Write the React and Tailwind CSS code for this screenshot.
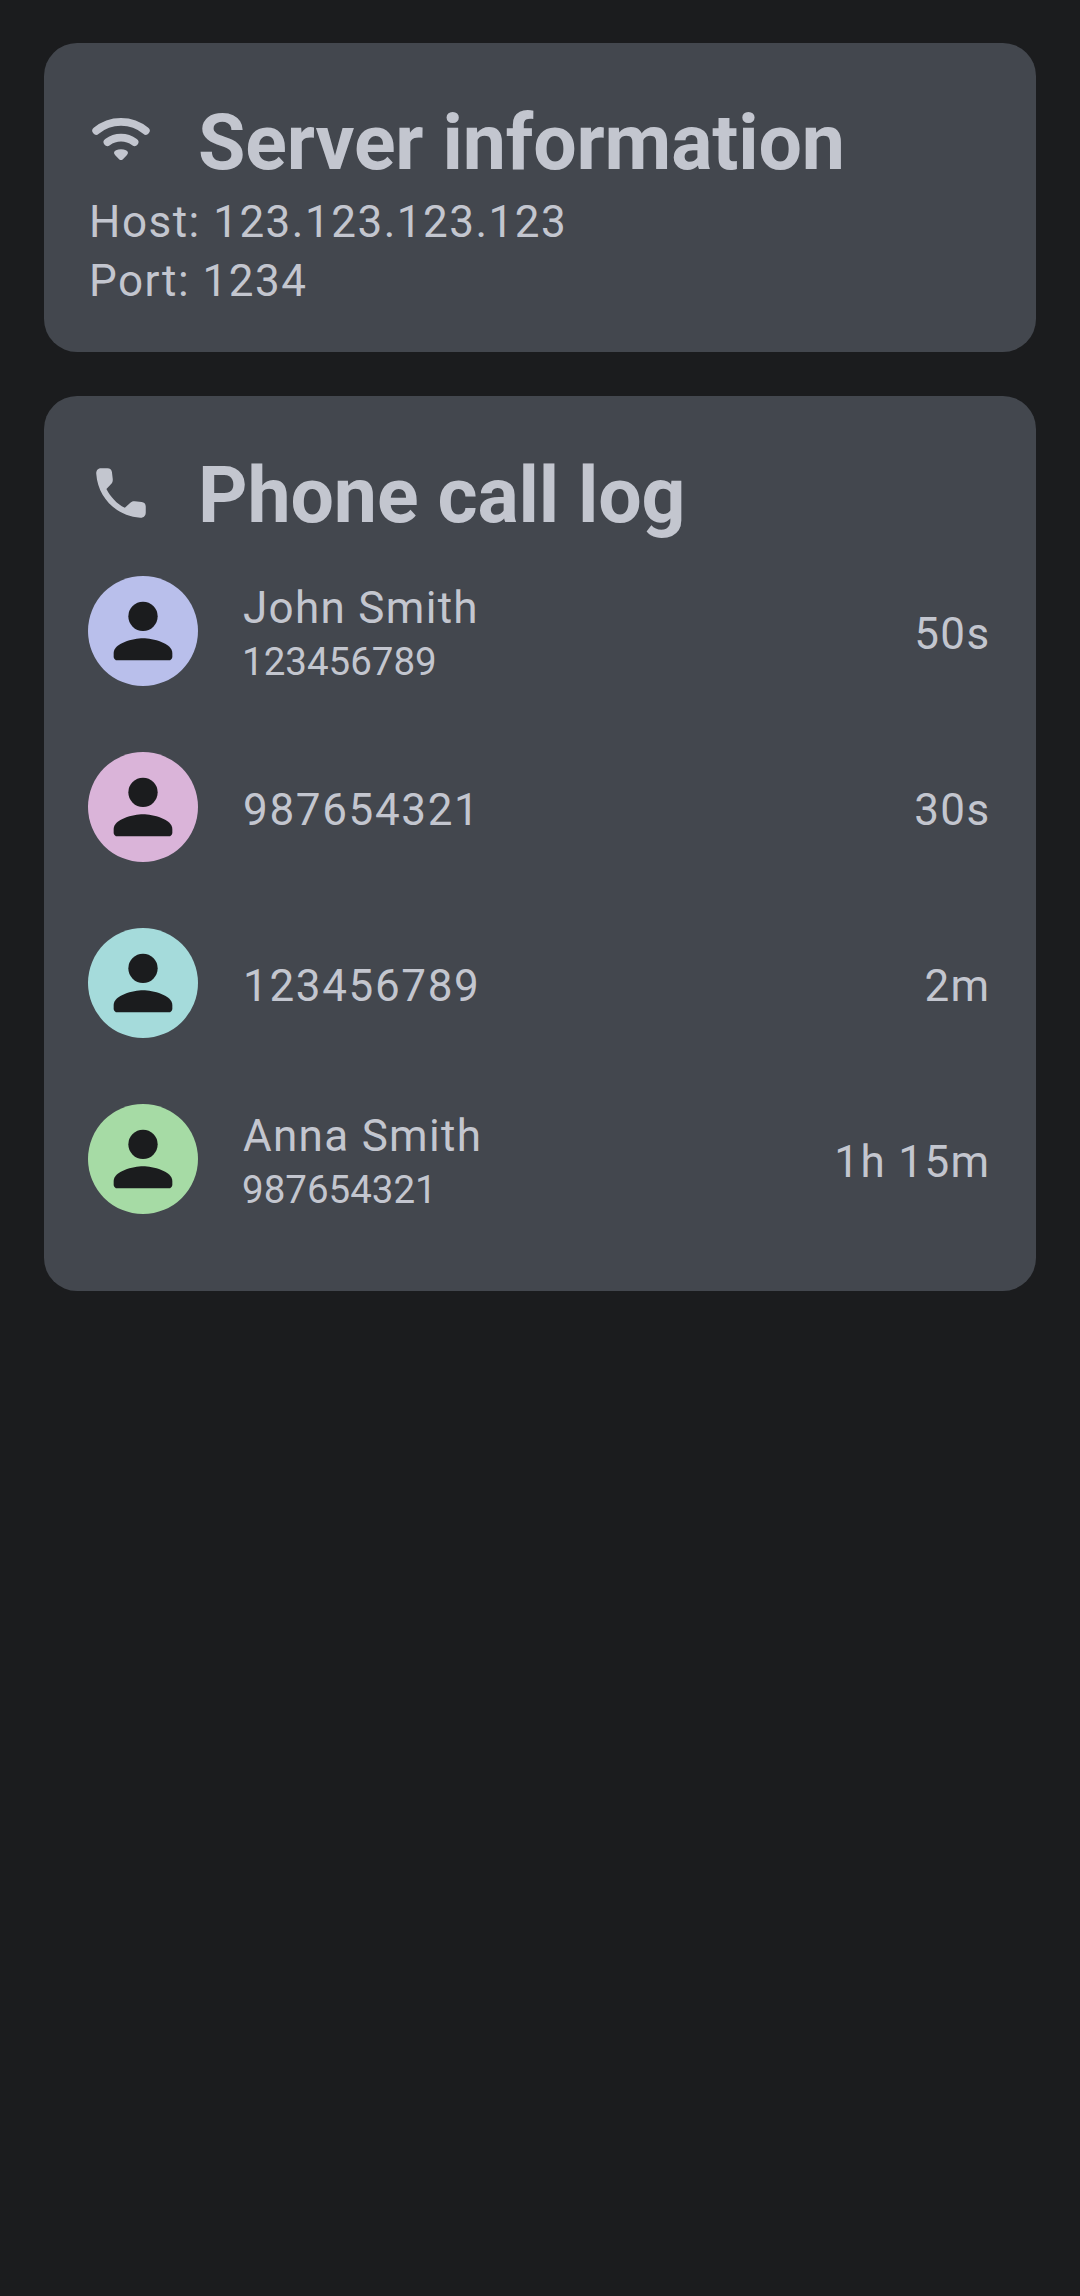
const calls = [
  { title: "John Smith", subtitle: "123456789", duration: "50s", color: "bg-[#b9bfeb]" },
  { title: "987654321", duration: "30s", color: "bg-[#dab4d9]" },
  { title: "123456789", duration: "2m", color: "bg-[#a5dbdb]" },
  { title: "Anna Smith", subtitle: "987654321", duration: "1h 15m", color: "bg-[#a6dba5]" },
];

function WifiIcon() {
  return (
    <svg viewBox="0 0 24 24" className="size-[66px] shrink-0" fill="none" aria-hidden="true">
      <path d="M3 8.65C8.1 4.3 15.9 4.3 21 8.65M7.1 12.75C10 10.6 14 10.6 16.9 12.75" stroke="currentColor" strokeWidth="2.85" strokeLinecap="round" />
      <path d="M10.2 15.75C11.2 15.25 12.8 15.25 13.8 15.75C14.7 16.2 14.75 16.9 14.1 17.55L12.6 19.05C12.25 19.4 11.75 19.4 11.4 19.05L9.9 17.55C9.25 16.9 9.3 16.2 10.2 15.75Z" fill="currentColor" />
    </svg>
  );
}

function PhoneIcon() {
  return (
    <svg viewBox="0 0 24 24" className="-mt-px size-[66px] shrink-0" fill="currentColor" aria-hidden="true">
      <path d="M4.8 3H7.1C8 3 8.6 3.5 8.7 4.4L9 6.9C9.05 7.7 8.9 8.2 8.5 8.6L6.7 10.5C8.2 13.4 10.4 15.8 13.4 17.4L15.3 15.6C15.8 15.1 16.3 14.95 17 15L19.5 15.3C20.4 15.4 21 16 21 16.9V19.1C21 20.3 20.2 21.1 19 21C10.3 20.4 3.6 13.7 3 5C2.9 3.8 3.7 3 4.8 3Z" />
    </svg>
  );
}

function PersonIcon() {
  return (
    <svg viewBox="0 0 24 24" className="size-[88px]" fill="currentColor" aria-hidden="true">
      <circle cx="12" cy="8" r="4" />
      <path d="M12 14c-2.67 0-8 1.34-8 4v1c0 .55.45 1 1 1h14c.55 0 1-.45 1-1v-1c0-2.66-5.33-4-8-4z" />
    </svg>
  );
}

function Card({ icon, title, className, children }) {
  return (
    <section className={`rounded-[33px] bg-[#43474e] px-11 pt-[42px] ${className}`}>
      <header className="flex h-[110px] items-center gap-11">
        {icon}
        <h1 className="pt-[6px] text-[77px] leading-[99px] font-bold tracking-[-0.12px]">{title}</h1>
      </header>
      {children}
    </section>
  );
}

function CallRow({ title, subtitle, duration, color }) {
  return (
    <li className="flex h-44 items-start">
      <div className={`flex size-[110px] shrink-0 items-center justify-center rounded-full text-[#1b1c1e] ${color}`}>
        <PersonIcon />
      </div>
      <div className="ml-11 flex h-[116px] flex-1 flex-col justify-center">
        <p className={`pl-px text-[44px] ${subtitle ? "leading-[56px] tracking-[1.3px]" : "leading-[58px] tracking-[1.65px]"}`}>{title}</p>
        {subtitle && <p className="text-[38.5px] leading-[52px]">{subtitle}</p>}
      </div>
      <p className="mr-[1.5px] h-[116px] text-[44px] leading-[116px] tracking-[1.375px]">{duration}</p>
    </li>
  );
}

export default function App() {
  return (
    <main className="flex min-h-[2296px] flex-col gap-11 bg-[#1b1c1e] px-11 pt-[43px] font-[Roboto,sans-serif] text-[#c3c6cf]">
      <Card icon={<WifiIcon />} title="Server information" className="h-[309px]">
        <div className="-mt-0.5 pl-px text-[44px] leading-[59px] tracking-[1.5px]">
          <p>Host: 123.123.123.123</p>
          <p>Port: 1234</p>
        </div>
      </Card>
      <Card icon={<PhoneIcon />} title="Phone call log" className="h-[895px]">
        <ul className="pt-7">
          {calls.map((call, index) => (
            <CallRow key={index} {...call} />
          ))}
        </ul>
      </Card>
    </main>
  );
}
